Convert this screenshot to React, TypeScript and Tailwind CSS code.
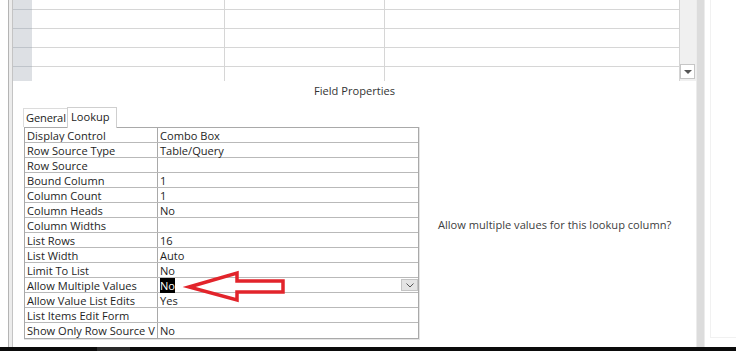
import React from 'react';

// Field properties pane of a table design view (Lookup tab)
const PROPS: ReadonlyArray<[string, string]> = [
  ['Display Control', 'Combo Box'],
  ['Row Source Type', 'Table/Query'],
  ['Row Source', ''],
  ['Bound Column', '1'],
  ['Column Count', '1'],
  ['Column Heads', 'No'],
  ['Column Widths', ''],
  ['List Rows', '16'],
  ['List Width', 'Auto'],
  ['Limit To List', 'No'],
  ['Allow Multiple Values', 'No'],
  ['Allow Value List Edits', 'Yes'],
  ['List Items Edit Form', ''],
  ['Show Only Row Source V', 'No'],
];

const GRID_ROWS = [10, 19, 19, 19, 14];

function DesignGrid() {
  return (
    <div className="flex h-[81px]">
      <div className="flex w-[19px] flex-col bg-[#dde0e4]">
        {GRID_ROWS.map((h, i) => (
          <div
            key={i}
            style={{ height: h }}
            className={i < GRID_ROWS.length - 1 ? 'border-b border-[#bfc4ca]' : ''}
          />
        ))}
      </div>
      <div className="flex w-[647px] flex-col">
        {GRID_ROWS.map((h, i) => (
          <div
            key={i}
            style={{ height: h }}
            className={`flex ${i < GRID_ROWS.length - 1 ? 'border-b border-[#d6d6d6]' : ''}`}
          >
            <div className="w-[193px] border-r border-[#d6d6d6]" />
            <div className="w-[160px] border-r border-[#d6d6d6]" />
            <div className="flex-1" />
          </div>
        ))}
      </div>
      <div className="flex w-[17px] flex-col justify-end border-l border-[#d4d4d4] bg-[#f0f0f0] pb-[2px]">
        <div className="flex h-[15px] w-[15px] items-center justify-center border border-[#c6c6c6] bg-white">
          <div className="h-0 w-0 border-x-[4px] border-t-[4px] border-x-transparent border-t-[#555]" />
        </div>
      </div>
    </div>
  );
}

function PropTable() {
  return (
    <div className="ml-[1px] w-[396px] border-r border-b border-[#e4e4e4]">
      <div className="w-[395px] border border-[#a9a9a9]">
        {PROPS.map(([label, value], i) => (
          <div
            key={label}
            className={`flex h-[15px] ${i < PROPS.length - 1 ? 'border-b border-[#b9b9b9]' : 'h-[14px]'}`}
          >
            <div className="w-[133px] overflow-hidden whitespace-nowrap border-r border-[#a9a9a9] pt-[1px] pl-[2px] leading-[13px]">
              {label}
            </div>
            <div className="flex flex-1 items-center justify-between pl-[2px] leading-[14px]">
              {label === 'Allow Multiple Values' ? (
                <>
                  <span className="bg-black pt-[1px] text-white">{value}</span>
                  <div className="flex h-[12px] w-[17px] items-center justify-center border border-[#c4c4c4] bg-[#e4e4e4]">
                    <svg width="8" height="5" viewBox="0 0 8 5">
                      <path d="M0.5 0.5 L4 4 L7.5 0.5" fill="none" stroke="#555" strokeWidth="1" />
                    </svg>
                  </div>
                </>
              ) : (
                <span className="pt-[1px]">{value}</span>
              )}
            </div>
          </div>
        ))}
      </div>
    </div>
  );
}

export default function App() {
  return (
    <div className="relative h-[351px] w-[736px] overflow-hidden bg-white font-['Open_Sans','Noto_Sans',sans-serif] text-[11.1px] text-[#1e1e1e]">
      <div className="flex h-[347px]">
        {/* left frame edge */}
        <div className="w-[8px]" />
        <div className="w-[1px] bg-[#b4b4b4]" />
        <div className="w-[3px] bg-[#ececec]" />
        <div className="w-[1px] bg-[#c4c4c4]" />

        <div className="flex w-[683px] flex-col">
          <DesignGrid />
          <div className="flex h-[20px] items-center justify-center leading-[14px] text-[#333]">
            Field Properties
          </div>
          <div className="mt-[5px] flex pl-[10px]">
            <div className="flex w-[397px] flex-col">
              <div className="flex h-[21px] items-end">
                <div className="flex h-[19px] w-[44px] shrink-0 items-center whitespace-nowrap border-t border-l border-[#dcdcdc] pl-[2px] tracking-[-0.15px] text-[#222]">
                  General
                </div>
                <div className="relative top-[1px] flex h-[21px] w-[50px] shrink-0 items-start border border-b-0 border-[#cfcfcf] bg-white pt-[1px] pl-[3px] text-[#222]">
                  Lookup
                </div>
              </div>
              <PropTable />
            </div>
            <div className="pt-[111px] pl-[18px] text-[#404040]">
              Allow multiple values for this lookup column?
            </div>
          </div>
        </div>

        {/* right frame */}
        <div className="w-[1px] bg-[#ececec]" />
        <div className="w-[7px] bg-[#dcdcdc]" />
        <div className="w-[1px] bg-[#ececec]" />
        <div className="flex flex-1 pl-[5px]">
          <div className="mb-[9px] flex-1 border-b border-l border-[#f1f1f1]" />
        </div>
      </div>
      <div className="flex h-[4px]">
        <div className="w-[97px] bg-[#0b0b0b]" />
        <div className="w-[33px] bg-[#2a2a2a]" />
        <div className="flex-1 bg-[#0b0b0b]" />
      </div>

      {/* red annotation arrow */}
      <svg
        className="pointer-events-none absolute left-[180px] top-[265px]"
        width="110"
        height="45"
        viewBox="0 0 110 45"
      >
        <polygon
          points="9,22 57,8 57,16 103,16 103,27 57,27 57,35"
          fill="none"
          stroke="#e2242b"
          strokeWidth="3.5"
          strokeLinejoin="miter"
        />
      </svg>
    </div>
  );
}
